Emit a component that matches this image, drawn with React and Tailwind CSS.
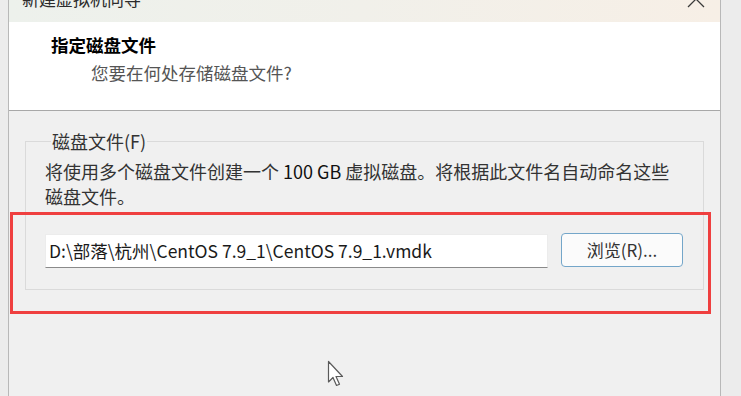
export default function App() {
  const font = { fontFamily: '"Noto Sans CJK SC", "Noto Sans", sans-serif' };
  return (
    <div
      className="relative w-[741px] h-[396px] overflow-hidden bg-[#ececec] flex"
      style={font}
    >
      {/* window */}
      <div className="ml-[8px] w-[713px] h-full border-x border-[#b8b8b8] flex flex-col">
        {/* title bar */}
        <div className="h-[22px] shrink-0 overflow-hidden bg-gradient-to-r from-[#edf1ec] via-[#f1f0ea] to-[#f7efe6] flex items-start justify-between">
          <div className="ml-[13px] -mt-[12px] text-[17px] leading-[22px] text-[#2b2b2b]">
            新建虚拟机向导
          </div>
          <svg
            width="20"
            height="20"
            viewBox="0 0 20 20"
            className="mr-[14px] -mt-[11px]"
            fill="none"
            stroke="#3a3a3a"
            strokeWidth="1.3"
          >
            <path d="M2 2 L18 18 M18 2 L2 18" />
          </svg>
        </div>
        {/* header */}
        <div className="h-[89px] shrink-0 bg-white border-b border-[#a8a8a8] flex flex-col">
          <div className="ml-[42px] mt-[11px] text-[17.5px] leading-[24px] font-bold text-black">
            指定磁盘文件
          </div>
          <div className="ml-[82px] mt-[4px] text-[17.5px] leading-[24px] text-[#555555]">
            您要在何处存储磁盘文件?
          </div>
        </div>
        {/* body */}
        <div className="flex-1 bg-[#f0f0f0] pt-[20px]">
          <fieldset className="ml-[16px] w-[679px] border border-[#dadada] pl-[19px] pr-[19px] pb-[21px]">
            <legend className="ml-[6px] px-[1px] text-[18px] leading-[20px] text-[#333333]">
              磁盘文件(F)
            </legend>
            <p className="pt-[8px] text-[18px] leading-[25px] text-[#333333] whitespace-nowrap">
              将使用多个磁盘文件创建一个 <span className="text-[#111111]">100 GB</span> 虚拟磁盘。将根据此文件名自动命名这些
              <br />
              磁盘文件。
            </p>
            <div className="mt-[25px] flex items-start">
              <div className="w-[503px] h-[34px] bg-white border border-[#ececec] border-b-[#8a8a8a] flex items-center pl-[3px] text-[17.5px] text-[#1a1a1a] whitespace-nowrap">
                D:\部落\杭州\CentOS 7.9_1\CentOS 7.9_1.vmdk
              </div>
              <div className="ml-[13px] -mt-[1px] w-[122px] h-[34px] rounded-[4px] border border-[#74a6c9] bg-[#fbfbfb] flex items-center justify-center text-[17px] text-[#333333]">
                浏览(R)...
              </div>
            </div>
          </fieldset>
        </div>
      </div>

      {/* red annotation box */}
      <div className="absolute left-[10px] top-[212px] w-[701px] h-[102px] border-[3px] border-[#ef3f3f]" />

      {/* mouse cursor */}
      <svg
        className="absolute left-[327px] top-[360px]"
        width="20"
        height="28"
        viewBox="0 0 20 28"
      >
        <path
          d="M1.5 1.5 L1.5 22 L6 17.5 L9.5 25.5 L12.5 24.2 L9 16.5 L15.5 16.5 Z"
          fill="#ffffff"
          stroke="#5a5a5a"
          strokeWidth="1.2"
          strokeLinejoin="round"
        />
      </svg>
    </div>
  );
}
